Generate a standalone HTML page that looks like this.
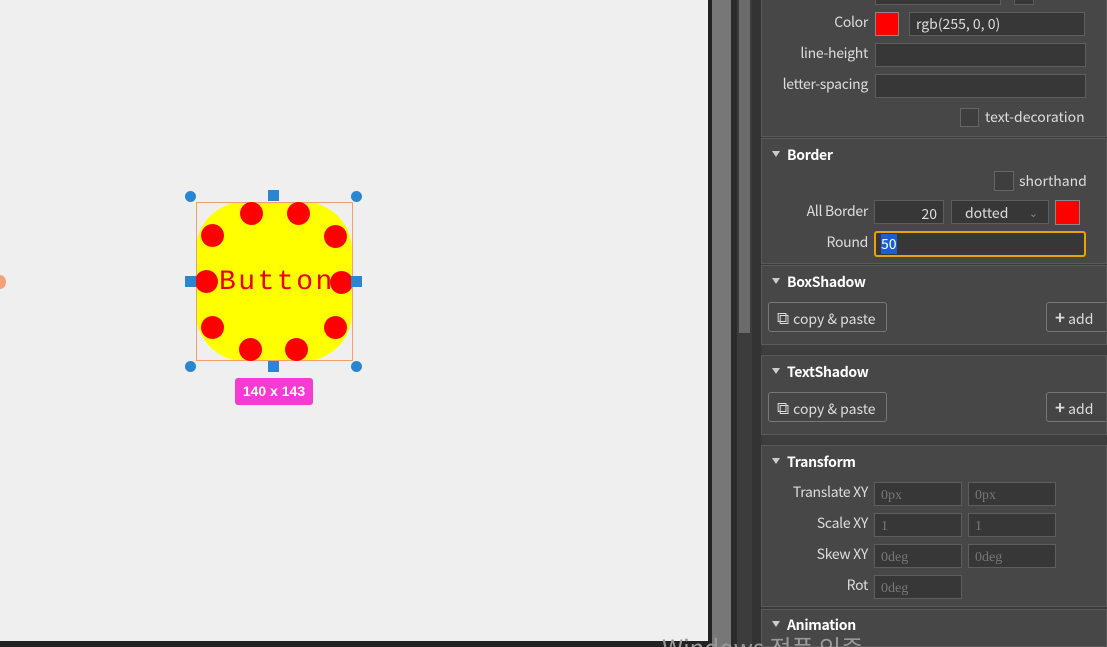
<!DOCTYPE html><html style="overflow:hidden;height:647px"><head><style>
body{margin:0;width:1107px;height:647px;overflow:hidden;background:#efefef;font-family:"Noto Sans CJK KR","Liberation Sans",sans-serif;position:relative}
.a{position:absolute}
.p{color:#ddd;font-size:14px;line-height:18px}
.lbl{position:absolute;color:#ddd;font-size:14px;text-align:right;width:110px;line-height:18px;letter-spacing:-0.3px}
.in{position:absolute;background:#373737;border:1px solid #5e5e5e;box-sizing:border-box;height:24px;color:#ddd;font-size:14px;padding:1px 6px;line-height:20px}
.ph{color:#777;font-family:"Liberation Serif",serif;padding-top:3px}
.sec{position:absolute;left:761px;width:346px;background:#474747;border:1px solid #5a5a5a;box-sizing:border-box;overflow:hidden}
.h{position:absolute;left:10px;color:#fff;font-size:14px;font-weight:bold;line-height:18px;letter-spacing:-0.3px}
.h:before{content:"";display:inline-block;border:4px solid transparent;border-top:6px solid #ccc;border-bottom:0;margin-right:7px;vertical-align:3px}
.btn{position:absolute;border:1px solid #777;border-radius:3px;height:30px;box-sizing:border-box;color:#ddd;font-size:14px;padding:4px 8px;line-height:20px;background:#454545}
.ic{font-size:17px;margin-right:4px}
.dot{position:absolute;width:23px;height:23px;border-radius:50%;background:#f00}
.hd{position:absolute;background:#2a86d0}
</style></head><body>
<div class="a" style="left:708px;top:0;width:4px;height:647px;background:#222"></div>
<div class="a" style="left:712px;top:0;width:19px;height:647px;background:#777"></div>
<div class="a" style="left:731px;top:0;width:6px;height:647px;background:#2b2b2b"></div>
<div class="a" style="left:737px;top:0;width:15px;height:647px;background:#3c3c3c"></div>
<div class="a" style="left:739px;top:0;width:11px;height:333px;background:#6b6b6b"></div>
<div class="a" style="left:752px;top:0;width:9px;height:647px;background:#333"></div>
<div class="a" style="left:761px;top:0;width:346px;height:647px;background:#3a3a3a"></div>

<div class="sec" style="top:-2px;height:139px">
<div class="in" style="left:113px;top:0;width:126px;height:6px;padding:0"></div>
<div class="in" style="left:252px;top:0;width:20px;height:6px;padding:0"></div>
<div class="lbl" style="left:-4px;top:14px">Color</div>
<div class="a" style="left:113px;top:13px;width:24px;height:24px;background:#f00;border:1px solid #888;box-sizing:border-box"></div>
<div class="in" style="left:147px;top:13px;width:176px;padding-top:1px">rgb(255, 0, 0)</div>
<div class="lbl" style="left:-4px;top:45px">line-height</div>
<div class="in" style="left:113px;top:44px;width:211px"></div>
<div class="lbl" style="left:-4px;top:76px">letter-spacing</div>
<div class="in" style="left:113px;top:75px;width:211px"></div>
<div class="a" style="left:198px;top:109px;width:19px;height:19px;border:1px solid #666;box-sizing:border-box;background:#3e3e3e"></div>
<div class="a p" style="left:223px;top:109px">text-decoration</div>
</div>

<div class="sec" style="top:138px;height:126px">
<div class="h" style="top:7px">Border</div>
<div class="a" style="left:232px;top:32px;width:20px;height:20px;border:1px solid #666;box-sizing:border-box;background:#3e3e3e"></div>
<div class="a p" style="left:257px;top:33px">shorthand</div>
<div class="lbl" style="left:-4px;top:63px">All Border</div>
<div class="in" style="left:112px;top:61px;width:70px;text-align:right;padding-top:3px">20</div>
<div class="in" style="left:189px;top:61px;width:98px;padding-left:13px;padding-top:2px">dotted<span style="position:absolute;right:10px;color:#888;font-size:11px;top:2px">&#8964;</span></div>
<div class="a" style="left:293px;top:61px;width:25px;height:25px;background:#f00;border:1px solid #888;box-sizing:border-box"></div>
<div class="lbl" style="left:-4px;top:94px">Round</div>
<div class="in" style="left:112px;top:92px;width:212px;height:26px;border:2px solid #e8a30c;border-radius:3px;padding:1px 5px"><span style="background:#1a5fd0;color:#fff">50</span></div>
</div>

<div class="sec" style="top:265px;height:80px">
<div class="h" style="top:7px">BoxShadow</div>
<div class="btn" style="left:6px;top:36px;width:119px"><span class="ic">&#10697;</span>copy &amp; paste</div>
<div class="btn" style="left:284px;top:36px;width:70px"><b style="font-size:17px">+</b> add</div>
</div>
<div class="a" style="left:762px;top:345px;width:345px;height:9px;background:#3e3e3e"></div>
<div class="sec" style="top:355px;height:80px">
<div class="h" style="top:7px">TextShadow</div>
<div class="btn" style="left:6px;top:36px;width:119px"><span class="ic">&#10697;</span>copy &amp; paste</div>
<div class="btn" style="left:284px;top:36px;width:70px"><b style="font-size:17px">+</b> add</div>
</div>
<div class="a" style="left:762px;top:435px;width:345px;height:9px;background:#3e3e3e"></div>

<div class="sec" style="top:445px;height:162px">
<div class="h" style="top:7px">Transform</div>
<div class="lbl" style="left:-4px;top:37px">Translate XY</div>
<div class="in ph" style="left:112px;top:36px;width:88px">0px</div>
<div class="in ph" style="left:206px;top:36px;width:88px">0px</div>
<div class="lbl" style="left:-4px;top:68px">Scale XY</div>
<div class="in ph" style="left:112px;top:67px;width:88px">1</div>
<div class="in ph" style="left:206px;top:67px;width:88px">1</div>
<div class="lbl" style="left:-4px;top:99px">Skew XY</div>
<div class="in ph" style="left:112px;top:98px;width:88px">0deg</div>
<div class="in ph" style="left:206px;top:98px;width:88px">0deg</div>
<div class="lbl" style="left:-4px;top:130px">Rot</div>
<div class="in ph" style="left:112px;top:129px;width:88px">0deg</div>
</div>
<div class="sec" style="top:609px;height:38px">
<div class="h" style="top:6px">Animation</div>
</div>
<div class="a" style="left:0;top:641px;width:708px;height:6px;background:#222"></div>
<div class="a" style="left:662px;top:633px;color:#999;font-size:24px;line-height:28px;white-space:nowrap">Windows 정품 인증</div>

<div class="a" style="left:-6px;top:275px;width:12px;height:14px;border-radius:50%;background:#f4a07a"></div>
<div class="a" style="left:196px;top:202px;width:156px;height:159px;background:#ff0;border-radius:48px"></div>
<div class="a" style="left:196px;top:202px;width:155px;height:157px;border:1px solid #f0a070;box-sizing:content-box"></div>
<div class="a" style="left:219px;top:267px;font-family:'Liberation Mono',monospace;font-size:28px;line-height:32px;color:#e00;letter-spacing:2.5px">Button</div>
<div class="dot" style="left:240px;top:202px"></div><div class="dot" style="left:287px;top:202px"></div>
<div class="dot" style="left:201px;top:224px"></div><div class="dot" style="left:324px;top:225px"></div>
<div class="dot" style="left:195px;top:270px"></div><div class="dot" style="left:330px;top:271px"></div>
<div class="dot" style="left:201px;top:316px"></div><div class="dot" style="left:324px;top:316px"></div>
<div class="dot" style="left:239px;top:338px"></div><div class="dot" style="left:285px;top:338px"></div>
<div class="hd" style="left:185px;top:191px;width:11px;height:11px;border-radius:50%"></div>
<div class="hd" style="left:351px;top:191px;width:11px;height:11px;border-radius:50%"></div>
<div class="hd" style="left:185px;top:361px;width:11px;height:11px;border-radius:50%"></div>
<div class="hd" style="left:351px;top:361px;width:11px;height:11px;border-radius:50%"></div>
<div class="hd" style="left:268px;top:190px;width:11px;height:11px"></div>
<div class="hd" style="left:268px;top:361px;width:11px;height:11px"></div>
<div class="hd" style="left:185px;top:276px;width:11px;height:11px"></div>
<div class="hd" style="left:351px;top:276px;width:11px;height:11px"></div>
<div class="a" style="left:235px;top:378px;width:78px;height:27px;background:#f53bd0;border-radius:3px;color:#fff;font-size:14px;font-weight:bold;text-align:center;line-height:27px;font-family:'Liberation Sans',sans-serif">140 x 143</div>
</body></html>
